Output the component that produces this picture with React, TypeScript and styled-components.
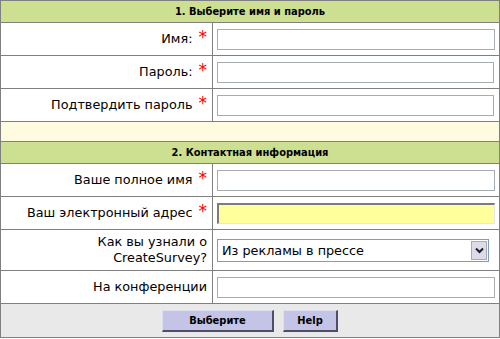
import React from "react";
import styled, { createGlobalStyle } from "styled-components";

const Global = createGlobalStyle`
  html, body { margin: 0; padding: 0; background: #ffffff; }
  body { font-family: "DejaVu Sans", Verdana, sans-serif; }
  * { box-sizing: border-box; }
`;

const boldFont = `"DejaVu Sans Condensed", "DejaVu Sans", Verdana, sans-serif`;

const Form = styled.div`
  width: 500px;
  border: 1px solid #808080;
  font-family: "DejaVu Sans", Verdana, sans-serif;
`;

const SectionHeader = styled.div`
  height: 22px;
  background: #cddf91;
  border-bottom: 1px solid #808080;
  display: flex;
  align-items: center;
  justify-content: center;
  font-family: ${boldFont};
  font-weight: bold;
  font-size: 11px;
  color: #000;
`;

const Spacer = styled.div`
  height: 20px;
  background: #fffbe0;
  border-bottom: 1px solid #808080;
`;

const Row = styled.div<{ $h: number }>`
  display: grid;
  grid-template-columns: 212px 1fr;
  height: ${(p) => p.$h}px;
  border-bottom: 1px solid #808080;
`;

const LabelCell = styled.div`
  border-right: 1px solid #808080;
  display: flex;
  align-items: center;
  justify-content: flex-end;
  text-align: right;
  padding-right: 5px;
  font-size: 12.8px;
  line-height: 16px;
  color: #000;
`;

const Star = styled.span`
  color: #ff0000;
  font-size: 17px;
  margin-left: 6px;
  position: relative;
  top: -2px;
`;

const FieldCell = styled.div`
  display: flex;
  align-items: center;
  padding: 0 4px;
`;

const TextInput = styled.input<{ $highlight?: boolean; $w?: number }>`
  width: ${(p) => p.$w ?? 278}px;
  height: 21px;
  margin: 0;
  padding: 1px 3px;
  font-family: "DejaVu Sans", Verdana, sans-serif;
  font-size: 12px;
  background: ${(p) => (p.$highlight ? "#ffff9c" : "#ffffff")};
  border-style: solid;
  border-width: ${(p) => (p.$highlight ? "2px 1px 1px 2px" : "1px")};
  border-color: ${(p) =>
    p.$highlight ? "#7c7c7c #e6e6e6 #e6e6e6 #7c7c7c" : "#a5acb2"};
  outline: none;
`;

const SelectBox = styled.div`
  position: relative;
  width: 272px;
  height: 23px;
  border: 1px solid #7f9db9;
  background: #fff;
  display: flex;
  align-items: center;
  padding-left: 4px;
  font-size: 12.8px;
  color: #000;
`;

const ArrowButton = styled.div`
  position: absolute;
  right: 1px;
  top: 1px;
  bottom: 1px;
  width: 16px;
  background: #dcdce8;
  border: 1px solid #a8a8c0;
  display: flex;
  align-items: center;
  justify-content: center;
`;

const ButtonRow = styled.div`
  height: 33px;
  background: #e9e9e9;
  display: flex;
  align-items: center;
  justify-content: center;
  gap: 9px;
`;

const Button = styled.button<{ $w: number }>`
  width: ${(p) => p.$w}px;
  height: 22px;
  margin: 0;
  padding: 0;
  background: #c4c4e6;
  border-style: solid;
  border-width: 1px 2px 2px 1px;
  border-color: #dedef2 #4e4e66 #4e4e66 #dedef2;
  font-family: ${boldFont};
  font-weight: bold;
  font-size: 11px;
  color: #000;
`;

function Field({ label, required = true, children, h = 33 }: { label: React.ReactNode; required?: boolean; children: React.ReactNode; h?: number }) {
  return (
    <Row $h={h}>
      <LabelCell>
        <span>{label}</span>
        {required && <Star>*</Star>}
      </LabelCell>
      <FieldCell>{children}</FieldCell>
    </Row>
  );
}

export default function App() {
  return (
    <>
      <Global />
      <Form>
        <SectionHeader>1. Выберите имя и пароль</SectionHeader>
        <Field label="Имя:">
          <TextInput />
        </Field>
        <Field label="Пароль:">
          <TextInput type="password" $w={277} />
        </Field>
        <Field label="Подтвердить пароль">
          <TextInput type="password" $w={277} />
        </Field>
        <Spacer />
        <SectionHeader>2. Контактная информация</SectionHeader>
        <Field label="Ваше полное имя">
          <TextInput />
        </Field>
        <Field label="Ваш электронный адрес">
          <TextInput $highlight />
        </Field>
        <Field
          h={41}
          required={false}
          label={
            <>
              Как вы узнали о
              <br />
              CreateSurvey?
            </>
          }
        >
          <SelectBox>
            Из рекламы в прессе
            <ArrowButton>
              <svg width="9" height="7" viewBox="0 0 9 7">
                <path d="M1 1.5 L4.5 5 L8 1.5" fill="none" stroke="#1c1c2c" strokeWidth="2" />
              </svg>
            </ArrowButton>
          </SelectBox>
        </Field>
        <Field label="На конференции" required={false}>
          <TextInput />
        </Field>
        <ButtonRow>
          <Button $w={112}>Выберите</Button>
          <Button $w={55}>Help</Button>
        </ButtonRow>
      </Form>
    </>
  );
}
